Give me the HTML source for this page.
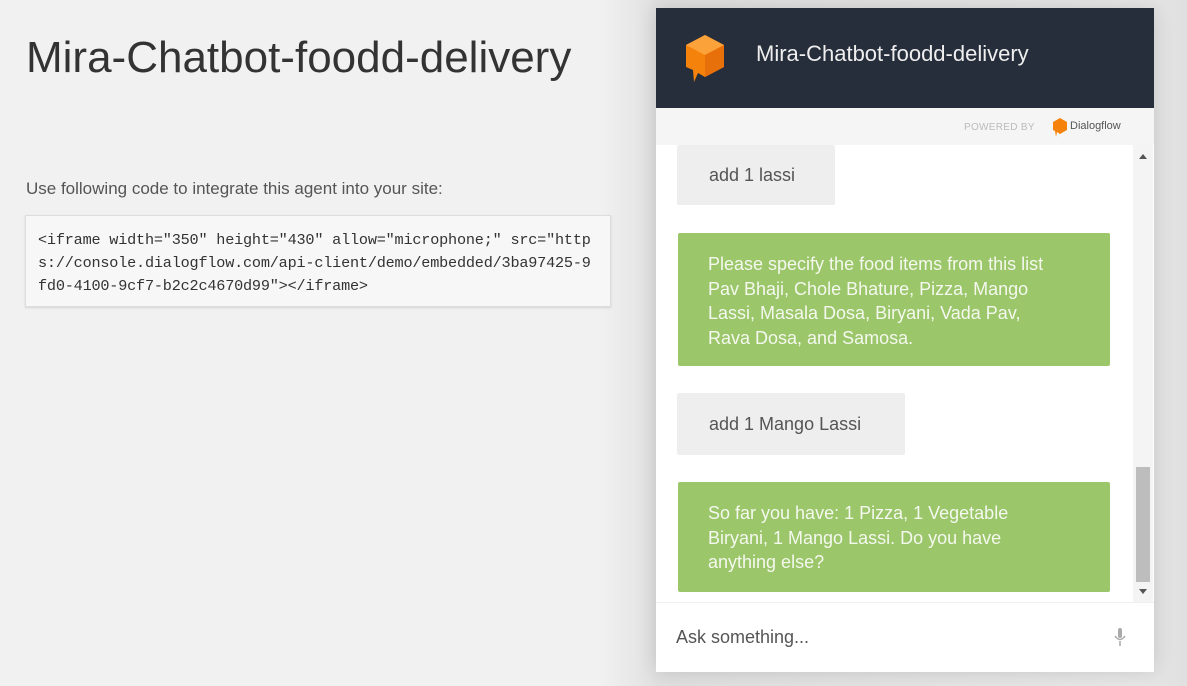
<!DOCTYPE html>
<html><head><style>
body{margin:0;width:1187px;height:686px;background:#f1f1f1;font-family:"Liberation Sans",sans-serif;position:relative;overflow:hidden}
.t{position:absolute;left:26px;top:33px;font-size:44px;color:#333;font-weight:300;letter-spacing:0}
.s{position:absolute;left:26px;top:179px;font-size:17px;color:#555;letter-spacing:0}
.code{position:absolute;left:25px;top:215px;width:586px;height:92px;box-sizing:border-box;background:#f7f7f7;border:1px solid #ddd;box-shadow:0 1px 2px rgba(0,0,0,.12);font-family:"Liberation Mono",monospace;font-size:15.2px;line-height:23px;color:#333;padding:13px 0 0 12px;white-space:pre;letter-spacing:-0.2px}
.shadow{position:absolute;left:600px;top:0;width:600px;height:686px;background:linear-gradient(90deg,#f1f1f1,#e0e0e0 10%,#e8e8e8 90%,#ddd)}
.w{position:absolute;left:656px;top:8px;width:498px;height:664px;background:#fff;box-shadow:0 0 20px rgba(0,0,0,.15)}
.h{height:100px;background:#262d3b;position:relative}
.h span{position:absolute;left:100px;top:33px;color:#eee;font-size:22px}
.p{height:37px;background:#f5f5f5;position:relative;font-size:9px;color:#bbb}
.m{position:absolute;left:21px;border-radius:2px;font-size:18px;box-sizing:border-box}
.u{background:#eee;color:#555;padding:0 0 0 32px;line-height:60px}
.g{background:#9bc66a;color:#f4f8ee;padding:19px 50px 20px 30px;line-height:24.5px;width:432px}
.sb{position:absolute;left:477px;top:137px;width:20px;height:457px;background:#f4f4f4}
</style></head><body>
<div class="shadow"></div>
<div class="t">Mira-Chatbot-foodd-delivery</div>
<div class="s">Use following code to integrate this agent into your site:</div>
<div class="code">&lt;iframe width="350" height="430" allow="microphone;" src="http
s://console.dialogflow.com/api-client/demo/embedded/3ba97425-9
fd0-4100-9cf7-b2c2c4670d99"&gt;&lt;/iframe&gt;</div>
<div class="w">
<div class="h"><svg style="position:absolute;left:28px;top:25px" width="42" height="50" viewBox="0 0 42 50"><path d="M21 2 L40 12 L40 34 L21 44 L14 40 L10 49 L9 37 L2 34 L2 12Z" fill="#f5820b"/><path d="M21 2 L40 12 L21 22 L2 12Z" fill="#fca23a"/><path d="M21 22 L40 12 L40 34 L21 44Z" fill="#e8700a"/></svg><span>Mira-Chatbot-foodd-delivery</span></div>
<div class="p"><span style="position:absolute;left:308px;top:14px;font-size:10px;letter-spacing:.3px">POWERED BY</span><svg style="position:absolute;left:396px;top:9px" width="16" height="20" viewBox="0 0 16 20"><path d="M8 1L15 5L15 13L8 17L5 15L4 20L3 14L1 13L1 5Z" fill="#f5820b"/></svg><span style="position:absolute;left:414px;top:12px;font-size:11px;color:#555">Dialogflow</span></div>
<div class="m u" style="top:137px;width:158px;height:60px">add 1 lassi</div>
<div class="m g" style="top:225px;height:133px;left:22px">Please specify the food items from this list Pav Bhaji, Chole Bhature, Pizza, Mango Lassi, Masala Dosa, Biryani, Vada Pav, Rava Dosa, and Samosa.</div>
<div class="m u" style="top:385px;width:228px;height:62px;line-height:62px">add 1 Mango Lassi</div>
<div class="m g" style="top:474px;height:110px;left:22px;padding-right:60px">So far you have: 1 Pizza, 1 Vegetable Biryani, 1 Mango Lassi. Do you have anything else?</div>
<div class="sb"><div style="position:absolute;left:3px;top:322px;width:14px;height:115px;background:#bdbdbd"></div><div style="position:absolute;left:6px;top:9px;border:4px solid transparent;border-bottom:5px solid #555;border-top:0"></div><div style="position:absolute;left:6px;top:444px;border:4px solid transparent;border-top:5px solid #555;border-bottom:0"></div></div>
<div style="position:absolute;left:0;top:594px;width:498px;height:70px;border-top:1px solid #f0f0f0"><span style="position:absolute;left:20px;top:24px;font-size:18px;color:#555">Ask something...</span><svg style="position:absolute;left:457px;top:24px" width="14" height="20" viewBox="0 0 14 20"><rect x="5" y="1" width="4" height="10" rx="2" fill="#aaa"/><path d="M2 9 Q7 16 12 9 M7 14 V19" stroke="#aaa" stroke-width="1.5" fill="none"/></svg></div>
</div>
</body></html>
